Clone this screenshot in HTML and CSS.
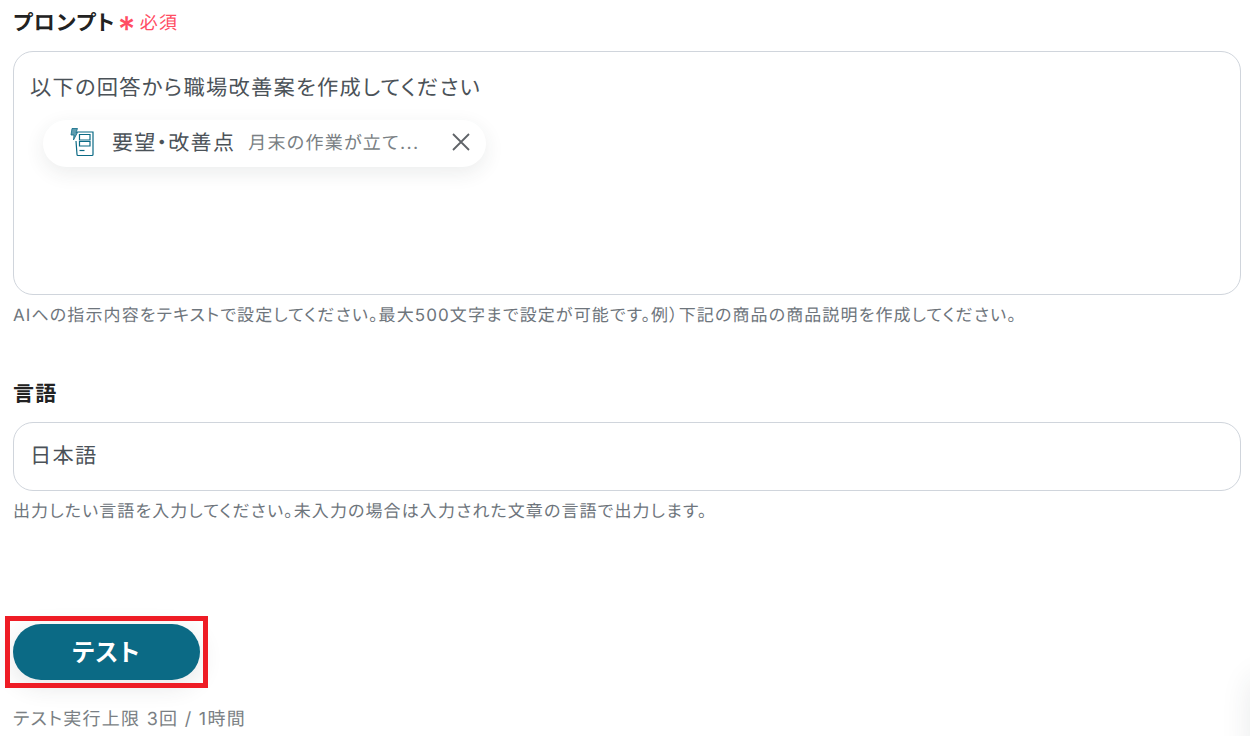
FILE: index.html
```html
<!DOCTYPE html>
<html lang="ja">
<head>
  <meta charset="UTF-8">
  <title>プロンプト設定</title>
  <link rel="stylesheet" href="styles.css">
</head>
<body>

<div class="container">
  <div class="field field-prompt">
    <div class="field-label">
      <span>プロンプト</span>
      <span class="required-mark">*</span>
      <span class="required-text">必須</span>
    </div>
    <div class="input-box prompt-box">
      <p class="input-text">以下の回答から職場改善案を作成してください</p>
      <div class="chip">
        <svg class="chip-icon" width="26" height="30" viewBox="0 0 26 30" fill="none" stroke="#0b6a85" stroke-width="1.2">
          <path d="M8 5H24V27.5a1 1 0 0 1 -1 1H9a1 1 0 0 1 -1 -1L7 14"/>
          <path d="M10.5 7.5H21V13H10.5Z"/>
          <path d="M10.5 14.5H21V19H10.5Z"/>
          <path d="M10.5 23.5H15.5"/>
          <path d="M3 1.5H8.5L7 5.5H8.5L4.5 13L5 8H2Z" fill="#5f9db0" stroke="#0b6a85" stroke-width="0.8"/>
        </svg>
        <span class="chip-name">要望・改善点</span>
        <span class="chip-value">月末の作業が立て...</span>
        <svg class="chip-close" width="20" height="20" viewBox="0 0 20 20" fill="none" stroke="#5f6368" stroke-width="1.8">
          <path d="M2 2L18 18M18 2L2 18"/>
        </svg>
      </div>
    </div>
    <p class="help-text">AIへの指示内容をテキストで設定してください。最大500文字まで設定が可能です。例）下記の商品の商品説明を作成してください。</p>
  </div>

  <div class="field field-language">
    <div class="field-label">言語</div>
    <div class="input-box language-box">
      <p class="input-text">日本語</p>
    </div>
    <p class="help-text">出力したい言語を入力してください。未入力の場合は入力された文章の言語で出力します。</p>
  </div>

  <div class="test-area">
    <div class="button-wrap">
      <button class="test-button">テスト</button>
      <div class="highlight"></div>
    </div>
    <p class="limit-text">テスト実行上限 3回 / 1時間</p>
  </div>
</div>

<div class="corner-shadow"></div>

</body>
</html>
```

FILE: styles.css
```css
html, body {
  height: 736px;
  overflow: hidden;
}
body {
  margin: 0;
  background-color: #ffffff;
  font-family: "Inter", "Noto Sans CJK JP", sans-serif;
  font-feature-settings: "palt";
  letter-spacing: 0.08em;
  text-rendering: geometricPrecision;
  color: #24292f;
}
p {
  margin: 0;
}
.container {
  padding: 12px 9px 0 13px;
}
.field-label {
  display: flex;
  align-items: center;
  height: 24px;
  font-size: 21px;
  font-weight: 600;
  line-height: 24px;
  letter-spacing: 0.06em;
  color: #222222;
}
.required-mark {
  margin-left: 2px;
  font-size: 34px;
  font-weight: 500;
  line-height: 24px;
  height: 24px;
  color: #ff4d63;
  transform: translateY(6px);
}
.required-text {
  margin-left: 3px;
  font-size: 18px;
  font-weight: 400;
  letter-spacing: 0.08em;
  color: #ff4d63;
}
.input-box {
  margin-top: 15px;
  border: 1px solid #d0d5dc;
  border-radius: 20px;
  box-sizing: border-box;
  padding: 21px 16px 0 16px;
}
.prompt-box {
  height: 244px;
}
.language-box {
  height: 69px;
  padding-top: 18px;
}
.input-text {
  font-size: 21.25px;
  line-height: 30px;
  color: #4b5258;
}
.chip {
  display: flex;
  align-items: center;
  width: 443px;
  height: 47px;
  margin: 17px 0 0 13px;
  box-sizing: border-box;
  padding: 0 15px 4px 26px;
  border-radius: 24px;
  background-color: #ffffff;
  box-shadow: 0 6px 20px rgba(40, 50, 60, 0.09);
}
.chip-icon {
  flex: none;
}
.chip-name {
  margin-left: 17px;
  font-size: 21px;
  color: #4b5258;
  white-space: nowrap;
}
.chip-value {
  margin-left: 13px;
  font-size: 18px;
  color: #7a7f84;
  white-space: nowrap;
}
.chip-close {
  margin-left: auto;
  flex: none;
}
.help-text {
  margin-top: 10px;
  font-size: 17px;
  line-height: 22px;
  letter-spacing: 0.065em;
  color: #6e757c;
  white-space: nowrap;
}
.field-language {
  margin-top: 56px;
}
.test-area {
  margin-top: 101px;
}
.button-wrap {
  position: relative;
  width: 187px;
}
.test-button {
  display: block;
  width: 187px;
  height: 56px;
  padding: 0 0 4px;
  border: none;
  border-radius: 28px;
  background-color: #0b6a85;
  color: #ffffff;
  font-family: inherit;
  font-feature-settings: inherit;
  letter-spacing: 0.05em;
  font-size: 24px;
  font-weight: 700;
  box-shadow: 0 6px 24px rgba(40, 50, 60, 0.12);
}
.highlight {
  position: absolute;
  left: -8px;
  top: -8px;
  width: 193px;
  height: 62px;
  border: 5px solid #ee1c25;
}
.limit-text {
  margin-top: 28px;
  font-size: 18px;
  line-height: 24px;
  color: #7a7f84;
  white-space: nowrap;
}
.corner-shadow {
  position: absolute;
  right: -30px;
  bottom: -30px;
  width: 30px;
  height: 90px;
  border-radius: 15px;
  box-shadow: 0 0 30px rgba(40, 50, 60, 0.1);
}
```
